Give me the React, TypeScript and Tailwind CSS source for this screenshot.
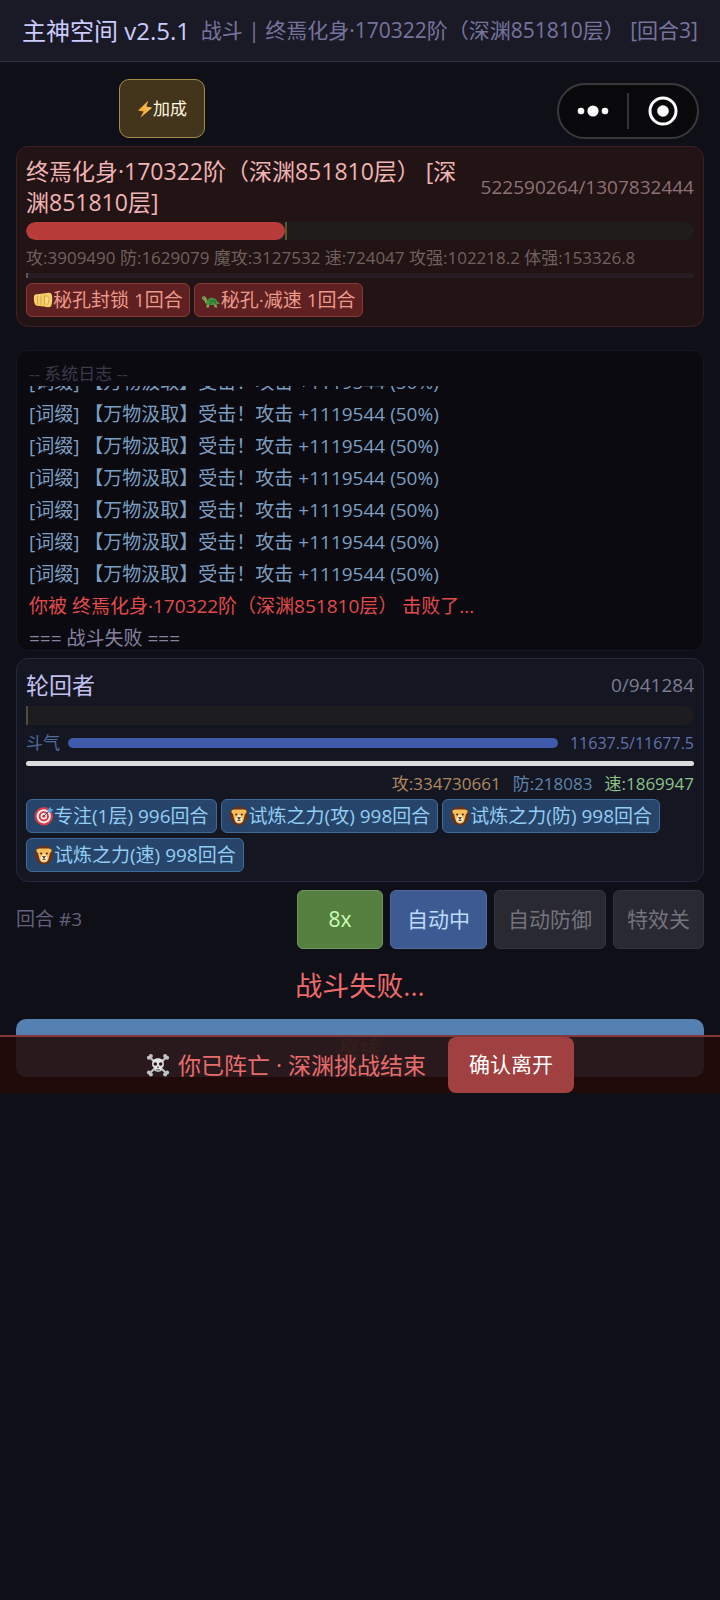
import type { ReactNode } from "react";

const logLines = Array.from({ length: 7 }, (_, i) => ({
  id: i,
  text: "[词缀] 【万物汲取】受击！攻击 +1119544 (50%)",
}));

function BoltIcon() {
  return (
    <svg viewBox="0 0 16 18" className="w-4 h-[18px] shrink-0" aria-hidden="true">
      <path d="M11.2 0.8 1 10.4l5.6 1.2L3.4 17.4 15 7.8 9 6.4z" fill="#f3a93c" />
      <path d="M11.2 0.8 4.6 9.2l4.8 1.2-6 7L15 7.8 9 6.4z" fill="#f9b94e" />
    </svg>
  );
}

function FistIcon() {
  return (
    <svg viewBox="0 0 20 20" className="w-5 h-5 shrink-0" aria-hidden="true">
      <path d="M2.2 4.4 15.5 2.8c2.4-.2 3.6 1.2 3.7 4.6.1 4.4-.3 8.2-1.8 9.3-2 1-4.4.2-6.4-.2L4 15.8C1.8 15.4 1 12.4.9 9.2.9 6.8.9 4.9 2.2 4.4z" fill="#f5cf6a" />
      <path d="M4.6 4.8v10M8 4.4v10.8M11.4 4v11.6" stroke="#d39a3c" strokeWidth="0.8" fill="none" />
      <path d="M2.2 6c.8-1 1.8-1 2.2 0M5.6 5.6c.6-.9 1.6-.9 2 0M9 5.2c.6-.9 1.6-.9 2 0" stroke="#ffe9a8" strokeWidth="0.8" fill="none" />
      <path d="M12 6.5c2.6-1.2 4.3.2 4 2.8-.2 2.6-.6 4.6-2.6 6.2" stroke="#d39a3c" strokeWidth="0.8" fill="#fbdc84" />
    </svg>
  );
}

function TurtleIcon() {
  return (
    <svg viewBox="0 0 20 20" className="w-5 h-5 shrink-0" aria-hidden="true">
      <path d="M1 8.2C.8 6.6 2.2 6 3.6 6.3c1.8.5 1.7 2.7 2.9 4.3l1.3 3.2-3-.4C3.6 12.3 3.8 10.3 3 9.9 2 9.7 1.1 9.4 1 8.2z" fill="#86a45c" />
      <path d="M6 13.5l-.8 4h2.6l.8-3.4M12.8 14l.8 3.6h2.6l-.9-3.9 3.6.1-2-1.8" fill="#86a45c" />
      <path d="M5.2 14c.2-3.8 2.5-6.2 5.7-6.2 3.2 0 5.7 2.6 6.5 5.6-3.5 1.9-8.3 2.3-12.2.6z" fill="#469042" />
      <path d="M8.5 9.5l1.5 1.9-1 3M13 8.8l-3 2.6h4l1.8-1.3M14 11.4l.2 2.8" stroke="#296b2c" strokeWidth="0.8" fill="none" />
      <circle cx="2.6" cy="7.7" r="0.5" fill="#222" />
    </svg>
  );
}

function TargetIcon() {
  return (
    <svg viewBox="0 0 20 20" className="w-5 h-5 shrink-0" aria-hidden="true">
      <circle cx="9.8" cy="10.3" r="9.2" fill="#d43c45" />
      <circle cx="9.8" cy="10.3" r="7.1" fill="#f2eeee" />
      <circle cx="9.8" cy="10.3" r="5.1" fill="#d43c45" />
      <circle cx="9.8" cy="10.3" r="3.2" fill="#f2eeee" />
      <circle cx="9.8" cy="10.3" r="1.5" fill="#d43c45" />
      <path d="M9.8 10.3 15 5" stroke="#3b4a5c" strokeWidth="1" />
      <path d="M13.6 4.2 16.6.8l.6 2.2 2.3.6-3.3 3.2-2.3-.4z" fill="#4fa5e0" />
    </svg>
  );
}

function LionIcon() {
  return (
    <svg viewBox="0 0 20 20" className="w-5 h-5 shrink-0" aria-hidden="true">
      <path d="M10 .7c5.5 0 8.8 3.3 8.9 8.3.1 5-3.3 10.4-8.9 10.4S1 14 1.1 9C1.2 4 4.5.7 10 .7z" fill="#67331b" />
      <path d="M2.6 4.6C4.6 3 7 3.6 10 3.6s5.4-.6 7.4 1c.6 1.8-.4 3-1.6 3.6-.1 2.2-.8 3.6-1.2 5.4-.5 2.6-2.1 3.9-4.6 3.9s-4.1-1.3-4.6-3.9C5 11.8 4.3 10.4 4.2 8.2 3 7.6 2 6.4 2.6 4.6z" fill="#f7be5a" />
      <path d="M10 9c1.5 0 1.8 1.8 3 3 .9 1.2.6 4.4-3 4.4s-3.9-3.2-3-4.4c1.2-1.2 1.5-3 3-3z" fill="#fff0cf" />
      <circle cx="7.2" cy="8.6" r="1" fill="#3a2318" />
      <circle cx="12.8" cy="8.6" r="1" fill="#3a2318" />
      <path d="M8.5 11.4h3L10 13.2zM10 13v1.2M8.3 14.2q1.7 1.2 3.4 0" fill="#3a2318" stroke="#3a2318" strokeWidth="0.6" />
    </svg>
  );
}

function SkullIcon() {
  return (
    <svg viewBox="0 0 24 24" className="w-6 h-6 shrink-0" aria-hidden="true">
      <path d="M3.5 4 20.5 20.5M20.5 4 3.5 20.5" stroke="#bfc2c6" strokeWidth="2.2" strokeLinecap="round" />
      <g fill="#bfc2c6">
        <circle cx="2.9" cy="4.8" r="2" />
        <circle cx="4.9" cy="2.9" r="2" />
        <circle cx="21.1" cy="4.8" r="2" />
        <circle cx="19.1" cy="2.9" r="2" />
        <circle cx="2.9" cy="19.6" r="2" />
        <circle cx="4.9" cy="21.5" r="2" />
        <circle cx="21.1" cy="19.6" r="2" />
        <circle cx="19.1" cy="21.5" r="2" />
      </g>
      <path d="M12 5.2c3.9 0 5.9 2.3 5.9 5.7 0 1.9-.6 3.2-2.3 4v2.2c0 1.2-1.6 1.6-3.6 1.6s-3.6-.4-3.6-1.6v-2.2c-1.7-.8-2.3-2.1-2.3-4 0-3.4 2-5.7 5.9-5.7z" fill="#e3e5e8" />
      <circle cx="9.3" cy="11" r="1.8" fill="#2a1a1c" />
      <circle cx="14.7" cy="11" r="1.8" fill="#2a1a1c" />
      <path d="M12 12.8 11.1 14.8h1.8z" fill="#2a1a1c" />
      <path d="M9.6 16.8h4.8M10.8 16v1.8M12 16v1.8M13.2 16v1.8" stroke="#555" strokeWidth="0.6" />
    </svg>
  );
}

function Tag({ icon, tone, children }: { icon: ReactNode; tone: "debuff" | "buff"; children: ReactNode }) {
  return (
    <span
      className={`flex items-center h-[34px] rounded-md border text-[19px] leading-6 whitespace-nowrap ${
        tone === "debuff"
          ? "px-1.5 bg-[#5e2020] border-[#853a38] text-[#eb9a8c]"
          : "px-[7px] bg-[#27456a] border-[#406a98] text-[#93cdf2]"
      }`}
    >
      {icon}
      {children}
    </span>
  );
}

export default function App() {
  const enemyHp = Math.floor((522590264 / 1307832444) * 100);

  return (
    <div className="min-h-screen bg-[#0f0f17] font-['Open_Sans','Noto_Sans_CJK_SC',sans-serif]">
      <header className="flex items-center justify-between h-[62px] px-[22px] border-b border-[#2f2e40] bg-[#1a1a27] whitespace-nowrap">
        <h1 className="text-2xl text-[#ccccff]">主神空间 v2.5.1</h1>
        <span className="text-[21px] text-[#76749c]">战斗 | 终焉化身·170322阶（深渊851810层） [回合3]</span>
      </header>

      <div className="flex items-start justify-between pt-[17px] pl-[119px] pr-[21px]">
        <button className="flex items-center justify-center w-[86px] h-[59px] rounded-[10px] border border-[#a08c48] bg-[#43351b] text-[17px] text-[#fff8e0]">
          <BoltIcon />
          加成
        </button>
        <div className="flex items-center mt-1 w-[142px] h-14 rounded-full border-2 border-[#39393c] bg-[#09090c]">
          <button aria-label="更多" className="flex flex-1 items-center justify-center h-full">
            <svg viewBox="0 0 32 14" className="w-8 h-3.5" fill="#fff">
              <circle cx="4" cy="7" r="3.3" />
              <circle cx="16" cy="7" r="5.6" />
              <circle cx="28" cy="7" r="3.3" />
            </svg>
          </button>
          <span className="w-0.5 h-9 bg-[#343438]" />
          <button aria-label="关闭" className="flex flex-1 items-center justify-center h-full">
            <svg viewBox="0 0 30 30" className="w-[30px] h-[30px]">
              <circle cx="15" cy="15" r="13" fill="none" stroke="#fff" strokeWidth="3" />
              <circle cx="15" cy="15" r="5.8" fill="#fff" />
            </svg>
          </button>
        </div>
      </div>

      <main className="px-4 pt-[7px]">
        {/* Enemy */}
        <section className="px-[9px] pt-[9px] pb-[9px] rounded-xl border border-[#3d2024] bg-[#221314]">
          <div className="flex items-center gap-4">
            <h2 className="flex-1 text-[23px] leading-[31px] text-[#f0b4b4]">
              终焉化身·170322阶（深渊851810层） [深渊851810层]
            </h2>
            <span className="text-[19px] text-[#8c7274]">522590264/1307832444</span>
          </div>
          <div className="mt-1 h-[18px] rounded-full bg-[#1e1d1b] overflow-hidden">
            <div className="h-full border-r-2 border-[#5f5430]" style={{ width: `${enemyHp}%` }}>
              <div className="h-full rounded-full bg-[#b83c3a]" />
            </div>
          </div>
          <p className="mt-1.5 text-[17px] leading-6 text-[#70615f] whitespace-nowrap">
            攻:3909490 防:1629079 魔攻:3127532 速:724047 攻强:102218.2 体强:153326.8
          </p>
          <div className="mt-[3px] h-[5px] rounded-r-full border-l-2 border-[#5c5656] bg-[#271c21]" />
          <div className="mt-[5px] flex flex-wrap gap-1">
            <Tag tone="debuff" icon={<FistIcon />}>秘孔封锁 1回合</Tag>
            <Tag tone="debuff" icon={<TurtleIcon />}>秘孔·减速 1回合</Tag>
          </div>
        </section>

        {/* Battle log */}
        <section className="mt-[23px] px-3 pt-2.5 rounded-xl border border-[#171720] bg-[#0a0a10] overflow-hidden">
          <h3 className="text-[17px] leading-[25px] text-[#3c3a4a]">-- 系统日志 --</h3>
          <div className="flex flex-col justify-end gap-2 h-[264px] overflow-hidden text-[19px] leading-6 whitespace-nowrap">
            {logLines.map((line) => (
              <p key={line.id} className="text-[#7d9fc0]">{line.text}</p>
            ))}
            <p className="text-[#e14b4b]">你被 终焉化身·170322阶（深渊851810层） 击败了...</p>
            <p className="text-[#8583a0]">=== 战斗失败 ===</p>
          </div>
        </section>

        {/* Player */}
        <section className="mt-[7px] px-[9px] pt-[11px] pb-[9px] rounded-xl border border-[#232840] bg-[#141722]">
          <div className="flex items-center justify-between leading-[31px]">
            <h2 className="text-[23px] text-[#c4c0f0]">轮回者</h2>
            <span className="text-[19px] text-[#7c7c90]">0/941284</span>
          </div>
          <div className="mt-[5px] h-[19px] rounded-r-full border-l-2 border-[#4f4c38] bg-[#1d1d20]" />
          <div className="mt-1.5 flex items-center leading-6">
            <span className="text-[17px] text-[#526a9c]">斗气</span>
            <div className="flex-1 ml-2 mr-3 h-2.5 rounded-full bg-[#3f59ab]" />
            <span className="text-base text-[#6272ac]">11637.5/11677.5</span>
          </div>
          <div className="mt-1.5 h-[5px] rounded-full bg-[#dcdcdc]" />
          <div className="mt-1.5 flex justify-end gap-3 text-[17px] leading-6">
            <span className="text-[#b08860]">攻:334730661</span>
            <span className="text-[#5c84ac]">防:218083</span>
            <span className="text-[#8cc088]">速:1869947</span>
          </div>
          <div className="mt-[3px] flex flex-wrap gap-x-1 gap-y-[5px]">
            <Tag tone="buff" icon={<TargetIcon />}>专注(1层) 996回合</Tag>
            <Tag tone="buff" icon={<LionIcon />}>试炼之力(攻) 998回合</Tag>
            <Tag tone="buff" icon={<LionIcon />}>试炼之力(防) 998回合</Tag>
            <Tag tone="buff" icon={<LionIcon />}>试炼之力(速) 998回合</Tag>
          </div>
        </section>

        <div className="mt-2 flex items-center gap-[7px] text-[21px]">
          <span className="mr-auto text-[19px] text-[#62607a]">回合 #3</span>
          <button className="w-[86px] h-[59px] rounded-md border border-[#709860] bg-[#55803f] text-[#ccffb8]">8x</button>
          <button className="h-[59px] px-4 rounded-md border border-[#54699c] bg-[#3d5a92] text-[#bcdcff]">自动中</button>
          <button className="h-[59px] px-[13px] rounded-md border border-[#33333c] bg-[#292932] text-[#73737c]">自动防御</button>
          <button className="h-[59px] px-[13px] rounded-md border border-[#33333c] bg-[#292932] text-[#73737c]">特效关</button>
        </div>

        <p className="mt-[18px] text-center text-[27px] leading-[38px] text-[#ef6b6b]">战斗失败...</p>
        <button className="mt-3.5 block w-full h-[58px] rounded-[10px] bg-[#5580b2] text-[21px] text-[#c0a898]">继续</button>
      </main>

      {/* Defeat banner, covers the lower part of the continue button */}
      <div className="relative -mt-[42px] flex items-center justify-center h-[58px] border-t-2 border-[#82383c] bg-[#230a08]/88">
        <SkullIcon />
        <span className="ml-2 text-[23px] text-[#e86c6c]">你已阵亡 · 深渊挑战结束</span>
        <button className="ml-[22px] h-full px-[21px] rounded-lg bg-[#a04040] text-[21px] text-white">确认离开</button>
      </div>
    </div>
  );
}
